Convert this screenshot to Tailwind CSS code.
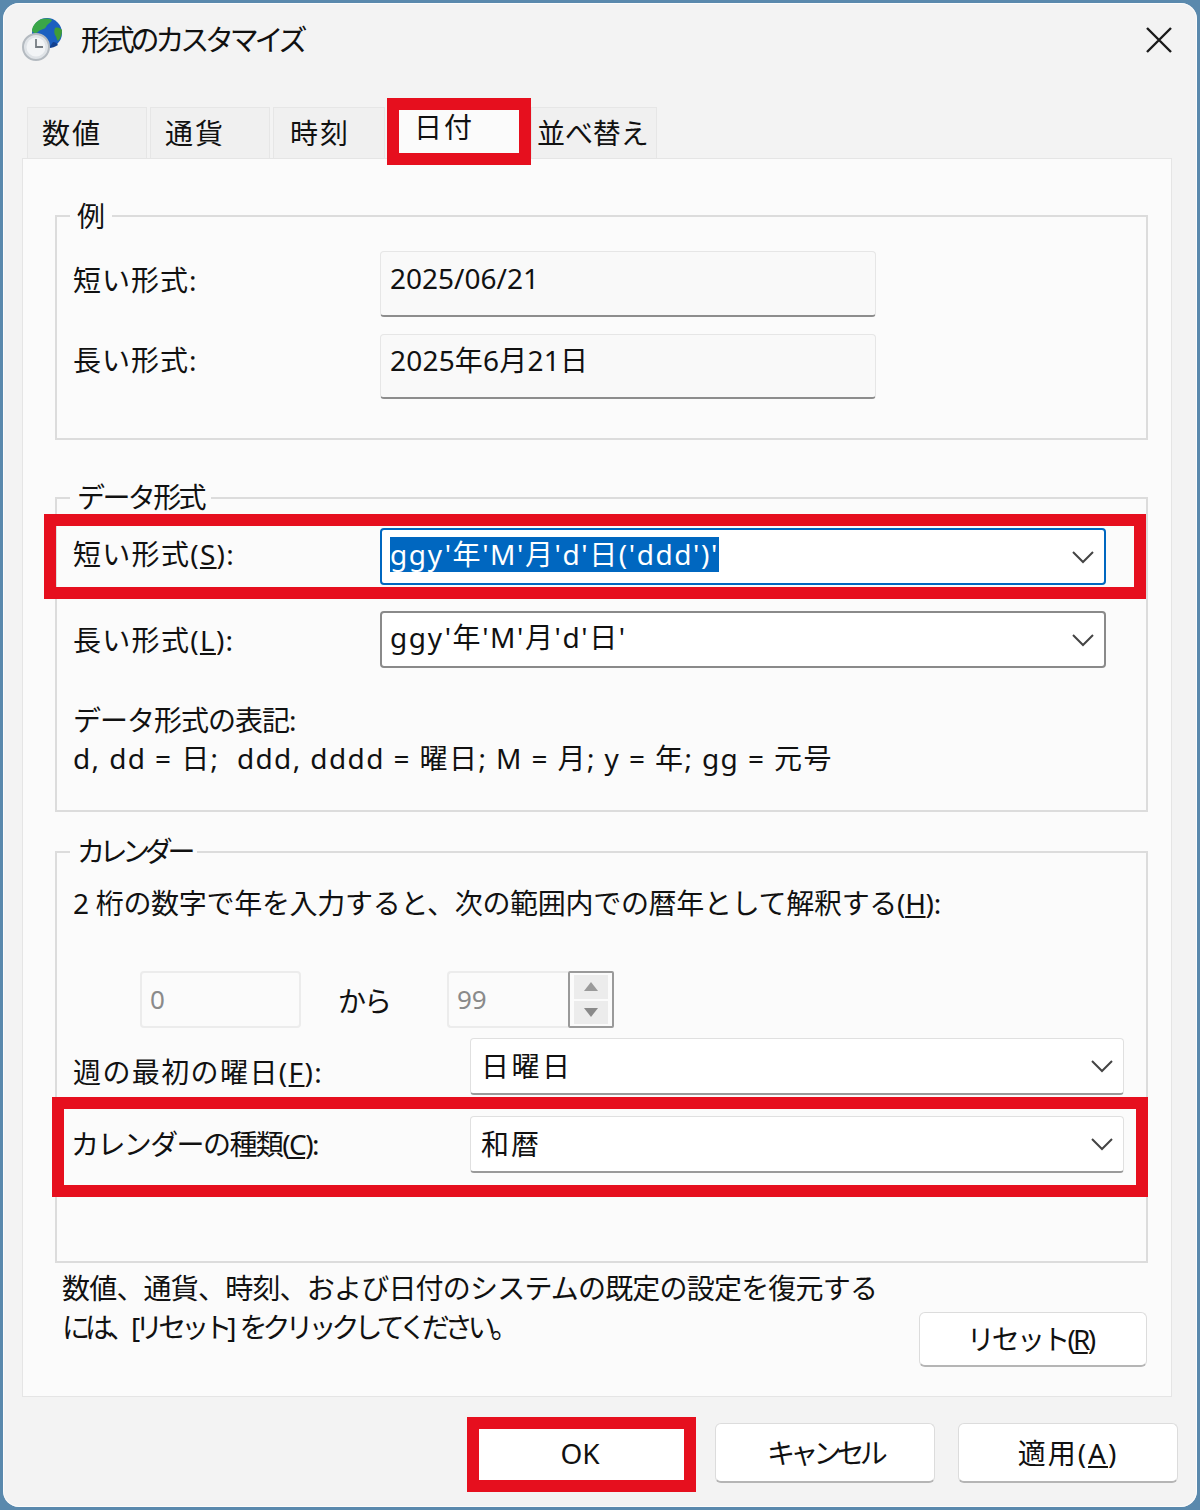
<!DOCTYPE html>
<html lang="ja">
<head>
    <meta charset="UTF-8">
    <title>形式のカスタマイズ</title>
    <script src="https://cdn.jsdelivr.net/npm/@tailwindcss/browser@4"></script>
</head>
<body class="bg-[#5a89ad]">
<div class="relative w-[1200px] h-[1510px] overflow-hidden bg-[#5a89ad] pt-[3px] pl-[3px] pb-[3px] pr-[3px] font-['Noto_Sans','Noto_Sans_CJK_JP',sans-serif] text-[28px] text-[#111]">
    <div class="w-full h-full bg-[#f3f3f3] rounded-[16px] shadow-[inset_0_0_0_1px_rgba(255,255,255,0.7)]">

        <!-- title bar -->
        <div class="flex items-center h-[74px] pl-[19px] pr-[24px]">
            <svg viewBox="0 0 42 44" class="w-[42px] h-[44px] shrink-0">
                <circle cx="25" cy="15" r="15" fill="#1b5fc0"/>
                <path d="M16 3c4-3 10-3 14-1-1 3-5 4-6 7-2 3-6 2-8 5-2 2-5 1-6-1 0-4 3-8 6-10z" fill="#3aa648"/>
                <path d="M33 10c3-1 5 0 7 2 0 4-1 8-4 11-2-2-1-4-3-6-1-2-1-5 0-7z" fill="#3f9c36"/>
                <path d="M36 27c-3 2-6 3-9 3l4-6c2 0 4 1 5 3z" fill="#12408f"/>
                <circle cx="14" cy="29" r="13" fill="#dfe3e7" stroke="#b4bac0" stroke-width="2"/>
                <circle cx="14" cy="29" r="9.5" fill="#f2f4f6"/>
                <path d="M14 21v8h7" fill="none" stroke="#767d83" stroke-width="1.8"/>
            </svg>
            <span class="ml-[17px] tracking-[-4.2px] text-[29px]">形式のカスタマイズ</span>
            <svg viewBox="0 0 28 28" class="ml-auto w-[28px] h-[28px] shrink-0">
                <path d="M2 2l24 24M26 2L2 26" stroke="#1a1a1a" stroke-width="2.4" fill="none"/>
            </svg>
        </div>

        <!-- tabs -->
        <div class="flex items-end h-[81px] pl-[24px] gap-[3px]">
            <div class="w-[120px] h-[51px] bg-[#f0f0f0] border-t border-l border-r border-[#e6e6e6] flex items-center pl-[14px] tracking-[2px]">数値</div>
            <div class="w-[120px] h-[51px] bg-[#f0f0f0] border-t border-l border-r border-[#e6e6e6] flex items-center pl-[14px] tracking-[2px]">通貨</div>
            <div class="w-[112px] h-[51px] bg-[#f0f0f0] border-t border-l border-r border-[#e6e6e6] flex items-center pl-[16px] tracking-[2px]">時刻</div>
            <div class="w-[140px] h-[56px] bg-[#fbfbfb] flex items-center pl-[26px] pb-[7px] tracking-[2px]">日付</div>
            <div class="w-[126px] h-[51px] bg-[#f0f0f0] border-t border-l border-r border-[#e6e6e6] flex items-center pl-[5px] tracking-[-0.1px] whitespace-nowrap">並べ替え</div>
        </div>

        <!-- panel -->
        <div class="w-[1150px] h-[1239px] ml-[19px] bg-[#fbfbfb] border border-[#e5e5e5] pt-[56px]">

            <!-- 例 -->
            <div class="relative ml-[32px] w-[1093px] h-[225px] border-2 border-[#dcdcdc] pt-[34px] pl-[16px]">
                <span class="absolute left-[13px] -top-[20px] bg-[#fbfbfb] px-[7px] leading-[38px]">例</span>
                <div class="flex">
                    <div class="w-[307px] pt-[9px] leading-[40px] tracking-[1px]">短い形式:</div>
                    <div class="w-[496px] h-[66px] bg-[#f9f9f9] border border-[#e6e6e6] border-b-2 border-b-[#8d8d8d] rounded-[4px] pl-[9px] pt-[5px] leading-[42px]">2025/06/21</div>
                </div>
                <div class="flex mt-[17px]">
                    <div class="w-[307px] pt-[6px] leading-[40px] tracking-[1px]">長い形式:</div>
                    <div class="w-[496px] h-[65px] bg-[#f9f9f9] border border-[#e6e6e6] border-b-2 border-b-[#8d8d8d] rounded-[4px] pl-[9px] pt-[4px] leading-[42px] tracking-[0.2px]">2025年6月21日</div>
                </div>
            </div>

            <!-- データ形式 -->
            <div class="relative ml-[32px] mt-[57px] w-[1093px] h-[315px] border-2 border-[#dcdcdc] pt-[29px] pl-[16px]">
                <span class="absolute left-[13px] -top-[21px] bg-[#fbfbfb] px-[7px] leading-[38px] tracking-[-2.6px]">データ形式</span>
                <div class="flex">
                    <div class="w-[307px] pt-[6px] leading-[40px] tracking-[1.3px]">短い形式(<u>S</u>):</div>
                    <div class="w-[726px] h-[57px] bg-white border-2 border-[#0067c0] rounded-[4px] pl-[8px] flex items-center justify-between pr-[8px]">
                        <span class="bg-[#0067c0] text-white leading-[35px] tracking-[1.6px] -translate-y-[2px] whitespace-nowrap">ggy'年'M'月'd'日('ddd')'</span>
                        <svg viewBox="0 0 24 14" class="w-[24px] h-[14px] mr-[1px]"><path d="M2 2l10 10L22 2" fill="none" stroke="#444" stroke-width="2"/></svg>
                    </div>
                </div>
                <div class="flex mt-[26px]">
                    <div class="w-[307px] pt-[9px] leading-[40px] tracking-[1.3px]">長い形式(<u>L</u>):</div>
                    <div class="w-[726px] h-[57px] bg-white border-2 border-[#8a8a8a] rounded-[4px] pl-[8px] flex items-center justify-between pr-[8px]">
                        <span class="leading-[35px] tracking-[1.6px] -translate-y-[2px] whitespace-nowrap">ggy'年'M'月'd'日'</span>
                        <svg viewBox="0 0 24 14" class="w-[24px] h-[14px] mr-[1px]"><path d="M2 2l10 10L22 2" fill="none" stroke="#444" stroke-width="2"/></svg>
                    </div>
                </div>
                <div class="mt-[33px] leading-[38px] whitespace-nowrap">
                    <div class="tracking-[-1px]">データ形式の表記:</div>
                    <div class="tracking-[1.4px]">d, dd = 日;&nbsp; ddd, dddd = 曜日; M = 月; y = 年; gg = 元号</div>
                </div>
            </div>

            <!-- カレンダー -->
            <div class="relative ml-[32px] mt-[39px] w-[1093px] h-[412px] border-2 border-[#dcdcdc] pt-[30px] pl-[16px]">
                <span class="absolute left-[13px] -top-[21px] bg-[#fbfbfb] px-[7px] leading-[38px] tracking-[-5.4px]">カレンダー</span>
                <div class="leading-[40px] tracking-[-0.3px] whitespace-nowrap">2 桁の数字で年を入力すると、次の範囲内での暦年として解釈する(<u>H</u>):</div>
                <div class="flex items-center mt-[48px] ml-[67px] h-[57px] text-[#8a8a8a]">
                    <div class="w-[161px] h-[57px] border-2 border-[#ececec] rounded-[4px] pl-[8px] flex items-center text-[26px]">0</div>
                    <div class="w-[146px] pl-[37px] text-[#111] pt-[3px] tracking-[-2px]">から</div>
                    <div class="w-[121px] h-[57px] border-2 border-r-0 border-[#ececec] rounded-l-[4px] pl-[8px] flex items-center text-[26px]">99</div>
                    <div class="w-[46px] h-[57px] border-2 border-[#9a9a9a] rounded-[2px] flex flex-col items-center justify-center gap-[2px] p-[2px]">
                        <div class="w-[34px] h-[24px] bg-[#ececec] flex items-center justify-center">
                            <svg viewBox="0 0 14 9" class="w-[14px] h-[9px]"><path d="M7 0l7 9H0z" fill="#9a9a9a"/></svg>
                        </div>
                        <div class="w-[34px] h-[24px] bg-[#ececec] flex items-center justify-center">
                            <svg viewBox="0 0 14 9" class="w-[14px] h-[9px]"><path d="M0 0h14L7 9z" fill="#8a8a8a"/></svg>
                        </div>
                    </div>
                </div>
                <div class="flex mt-[10px]">
                    <div class="w-[397px] pt-[14px] leading-[40px] tracking-[1.4px] whitespace-nowrap">週の最初の曜日(<u>F</u>):</div>
                    <div class="w-[654px] h-[57px] bg-white border border-[#e0e0e0] border-b-2 border-b-[#9a9a9a] rounded-[4px] pl-[10px] flex items-center justify-between pr-[9px]">
                        <span class="tracking-[2.5px]">日曜日</span>
                        <svg viewBox="0 0 24 14" class="w-[24px] h-[14px]"><path d="M2 2l10 10L22 2" fill="none" stroke="#444" stroke-width="2"/></svg>
                    </div>
                </div>
                <div class="flex mt-[21px]">
                    <div class="w-[397px] -ml-[2px] mr-[2px] pt-[8px] leading-[40px] tracking-[-1.6px] whitespace-nowrap">カレンダーの種類(<u>C</u>):</div>
                    <div class="w-[654px] h-[57px] bg-white border border-[#e0e0e0] border-b-2 border-b-[#9a9a9a] rounded-[4px] pl-[10px] flex items-center justify-between pr-[9px]">
                        <span class="tracking-[2px]">和暦</span>
                        <svg viewBox="0 0 24 14" class="w-[24px] h-[14px]"><path d="M2 2l10 10L22 2" fill="none" stroke="#444" stroke-width="2"/></svg>
                    </div>
                </div>
            </div>

            <!-- footer text and reset -->
            <div class="flex pl-[39px] pr-[24px] pt-[6px]">
                <div class="leading-[39px] whitespace-nowrap">
                    <div class="tracking-[-0.8px]">数値、通貨、時刻、および日付のシステムの既定の設定を復元する</div>
                    <div class="tracking-[-5px]">には、[リセット]<span class="ml-[8px]">をクリックしてください。</span></div>
                </div>
                <div class="ml-auto mt-[43px] w-[228px] h-[55px] bg-white border border-[#dcdcdc] border-b-2 border-b-[#b5b5b5] rounded-[6px] flex items-center justify-center pr-[6px] tracking-[-2.8px]">リセット(<u>R</u>)</div>
            </div>
        </div>

        <!-- dialog buttons -->
        <div class="flex justify-end gap-[23px] pr-[19px] pt-[26px]">
            <div class="w-[224px] h-[60px] bg-white rounded-[6px] flex items-center justify-center">OK</div>
            <div class="w-[220px] h-[60px] bg-white border border-[#dcdcdc] border-b-2 border-b-[#b5b5b5] rounded-[6px] flex items-center justify-center tracking-[-4.8px]">キャンセル</div>
            <div class="w-[220px] h-[60px] bg-white border border-[#dcdcdc] border-b-2 border-b-[#b5b5b5] rounded-[6px] flex items-center justify-center tracking-[2px]">適用(<u>A</u>)</div>
        </div>
    </div>

    <!-- red highlight frames over the dialog -->
    <div class="absolute left-[387px] top-[98px] w-[144px] h-[67px] border-[12px] border-[#e60f1e]"></div>
    <div class="absolute left-[44px] top-[514px] w-[1102px] h-[85px] border-[12px] border-[#e60f1e]"></div>
    <div class="absolute left-[52px] top-[1097px] w-[1096px] h-[100px] border-[12px] border-[#e60f1e]"></div>
    <div class="absolute left-[467px] top-[1417px] w-[229px] h-[75px] border-[12px] border-[#e60f1e]"></div>
</div>
</body>
</html>
